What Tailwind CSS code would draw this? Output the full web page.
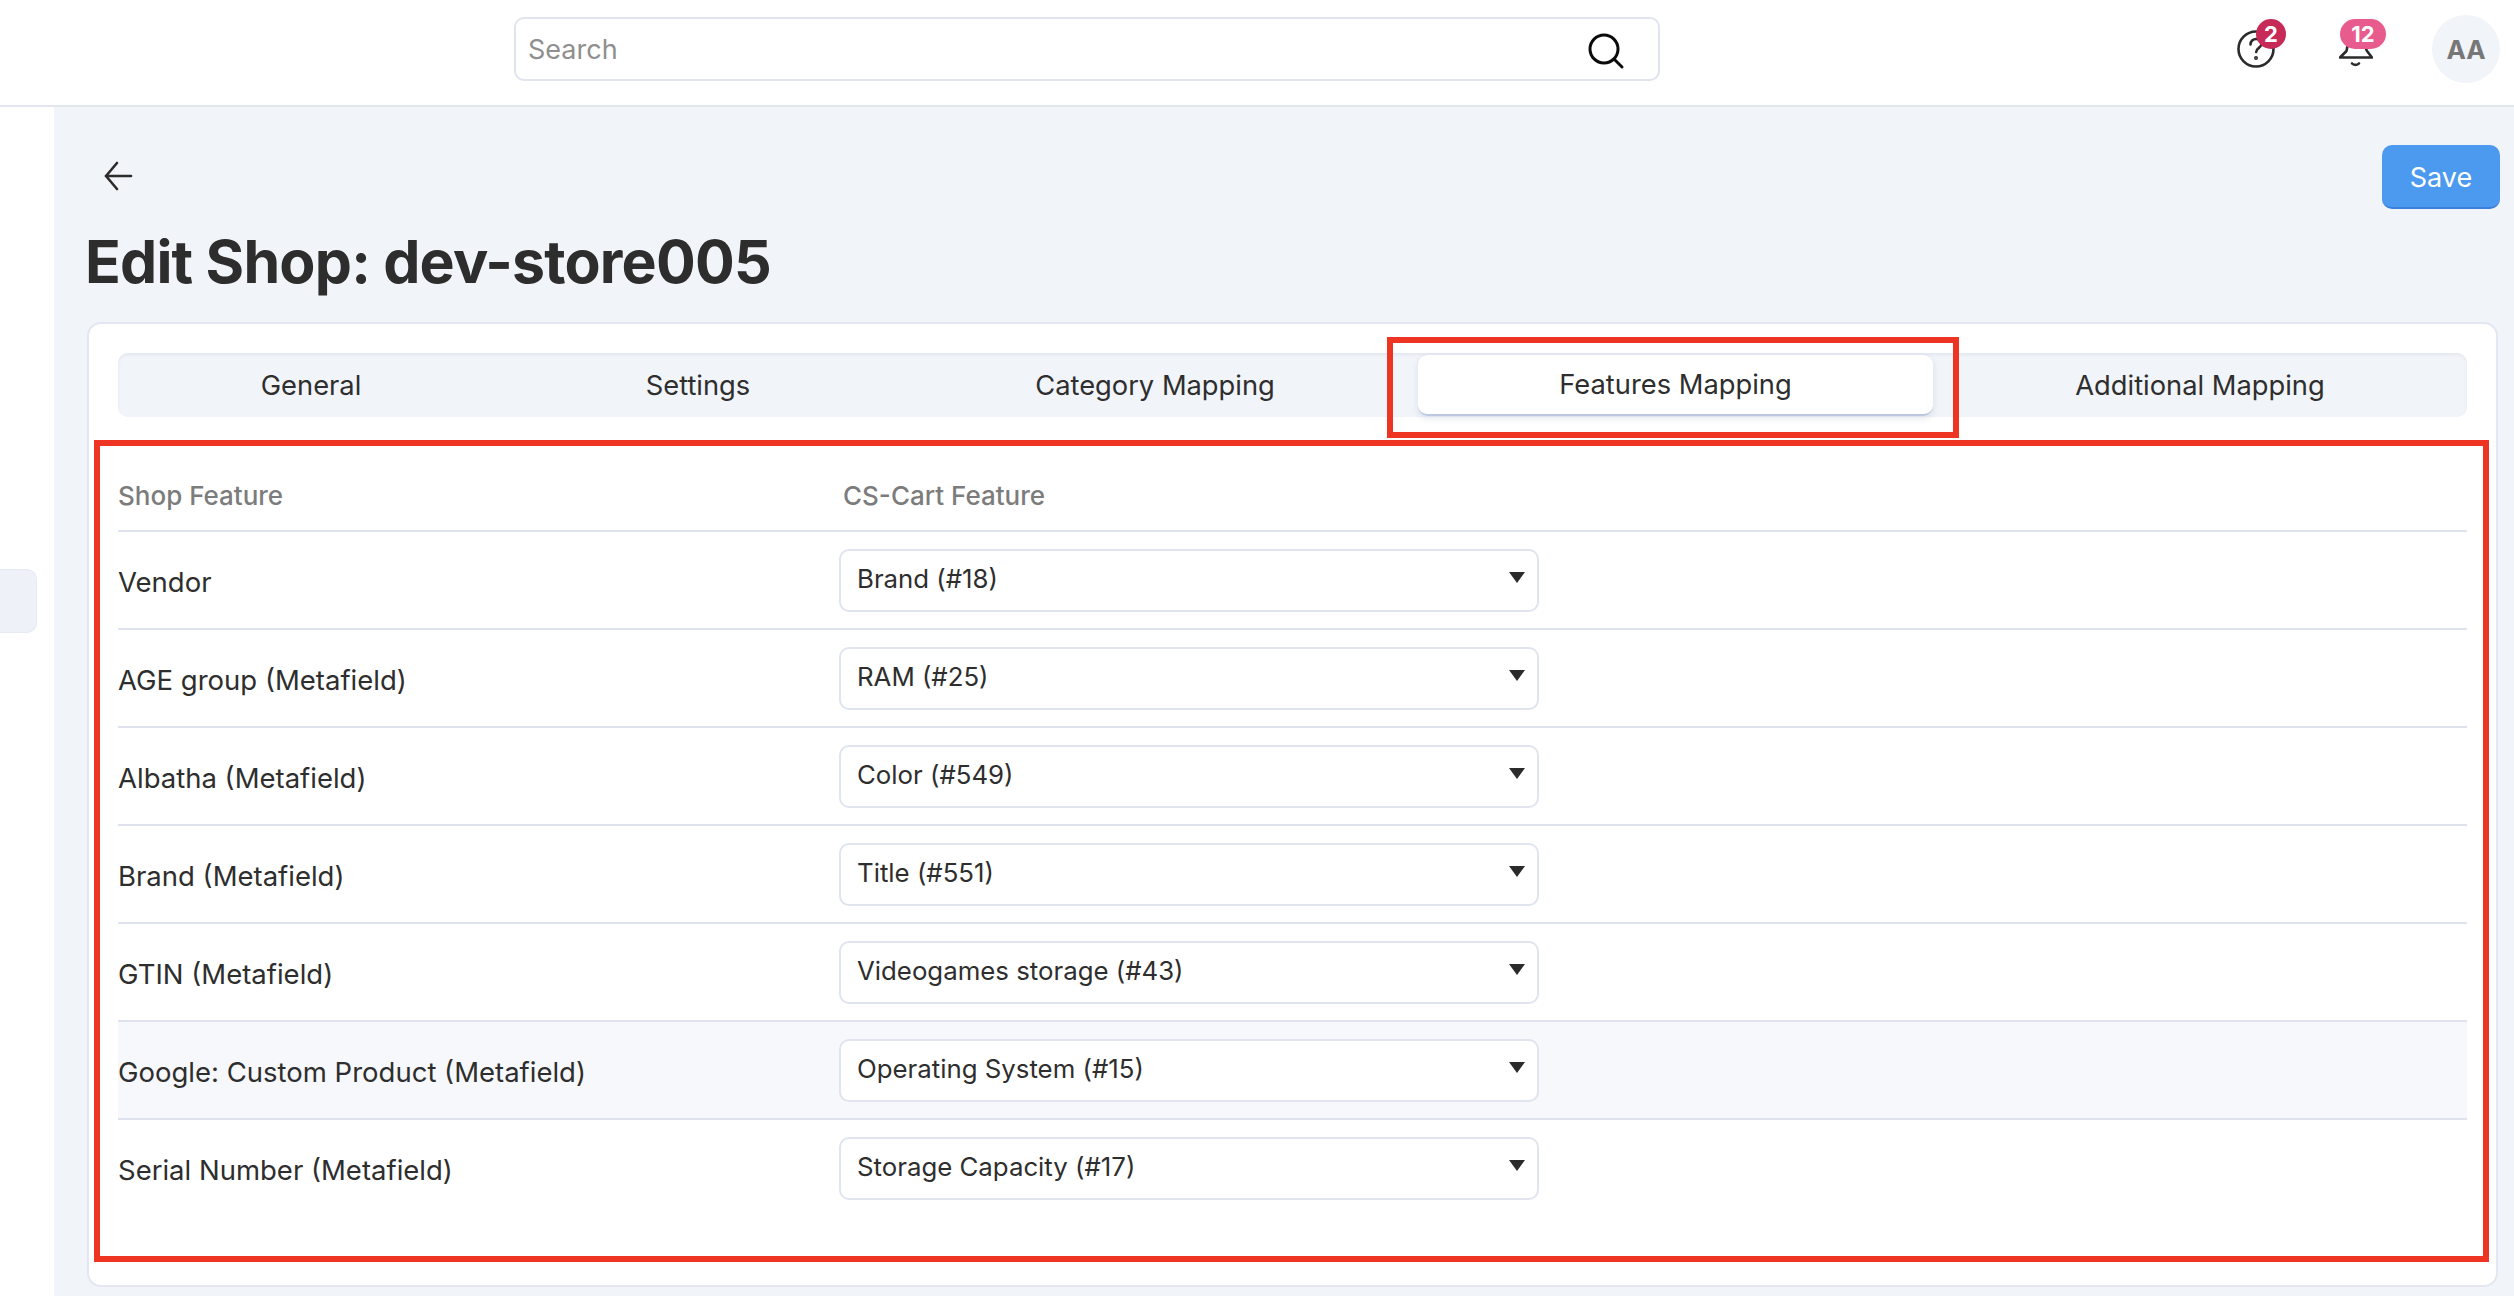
<!DOCTYPE html>
<html lang="en">
<head>
    <meta charset="UTF-8">
    <meta name="viewport" content="width=device-width, initial-scale=1.0">
    <title>Edit Shop</title>
    <script src="https://cdn.jsdelivr.net/npm/@tailwindcss/browser@4"></script>
</head>
<body class="bg-[#f1f4f9] font-['Inter',sans-serif] text-[#2e2e2e] w-[2514px] h-[1296px] overflow-hidden relative">

    <!-- Top bar -->
    <header class="h-[107px] bg-white border-b-2 border-[#e2e6ef] flex items-start relative">
        <div class="ml-[514px] mt-[17px] w-[1146px] h-[64px] flex rounded-[10px] border-2 border-[#dfe4ef]">
            <div class="flex-1 pl-[12px] pt-[2px] flex items-center text-[27px] text-[#8f8f8f]">Search</div>
            <div class="w-[104px]">
                <svg class="ml-[30px] mt-[11px]" width="44" height="44" viewBox="0 0 44 44" fill="none" stroke="#0b0b0b" stroke-width="3" stroke-linecap="round"><circle cx="20" cy="19" r="14"/><path d="M30 29l8 8"/></svg>
            </div>
        </div>

        <div class="ml-auto flex items-start">
            <!-- help -->
            <div class="relative w-[48px] h-[60px] mt-[19px]">
                <svg class="absolute -left-[1px] top-[11px]" width="38" height="38" viewBox="0 0 38 38" fill="none" stroke="#2b2b2b" stroke-width="2.6" stroke-linecap="round"><circle cx="19" cy="19" r="17.500"/><path d="M13.500 14.500c0-3.200 2.500-5.500 5.700-5.500 3.100 0 5.400 2 5.400 4.800 0 4-5.400 4.200-5.400 8.200"/><circle cx="19" cy="28" r="0.700" fill="#2b2b2b"/></svg>
                <span class="absolute left-[18px] top-0 w-[30px] h-[30px] rounded-full bg-[#c72a57] text-white text-[22px] leading-[30px] font-bold text-center">2</span>
            </div>
            <!-- notifications -->
            <div class="relative w-[46px] h-[60px] mt-[19px] ml-[54px]">
                <svg class="absolute -left-[1px] top-[16px]" width="34" height="32" viewBox="0 0 34 32" fill="none" stroke="#2b2b2b" stroke-width="2.6" stroke-linecap="round" stroke-linejoin="round"><path d="M9 4c0 0 0 7-1.500 12L1 22.500h32L28 16C25.500 12 25.500 4 25.500 4"/><path d="M13 28.500c1.500 1.800 5.500 1.800 7 0"/></svg>
                <span class="absolute left-0 top-0 w-[46px] h-[30px] rounded-full bg-[#e85c8d] text-white text-[22px] leading-[30px] font-bold text-center">12</span>
            </div>
            <!-- avatar -->
            <div class="w-[68px] h-[68px] mt-[15px] ml-[46px] mr-[14px] rounded-full bg-[#f1f4f9] text-[#777777] text-[26px] font-bold flex items-center justify-center">AA</div>
        </div>
    </header>

    <div class="flex">
        <!-- Sidebar -->
        <aside class="w-[54px] h-[1189px] bg-white shrink-0">
            <div class="mt-[462px] w-[37px] h-[64px] bg-[#eef2f8] rounded-r-[10px] border border-l-0 border-[#e6ebf3]"></div>
        </aside>

        <main class="flex-1 pl-[33px] pr-[16px]">
            <div class="flex items-start justify-between">
                <svg class="mt-[54px] ml-[16px]" width="30" height="30" viewBox="0 0 30 30" fill="none" stroke="#2b2b2b" stroke-width="2.6" stroke-linecap="round" stroke-linejoin="round"><path d="M28 15H3"/><path d="M14 2L3 15l11 13"/></svg>
                <button class="mt-[38px] mr-[-2px] w-[118px] h-[64px] pt-[4px] rounded-[10px] bg-[#4b9aef] border-b-2 border-[#3a7fdc] text-white text-[27px] font-normal">Save</button>
            </div>

            <h1 class="mt-[18px] -ml-[2px] h-[95px] text-[59px] leading-[70px] font-bold tracking-[-0.8px] text-[#2d2d2d]">Edit Shop: dev-store005</h1>

            <!-- Card -->
            <section class="w-[2411px] h-[965px] bg-white rounded-[14px] border-2 border-[#e2e7f1] pt-[29px] px-[29px]">
                <nav class="w-[2349px] h-[64px] flex items-center bg-[#f1f4f9] rounded-[10px] shadow-[inset_0_2px_3px_#e3e7f0] text-[27.3px]">
                    <div class="w-[386px] pt-[2px] text-center">General</div>
                    <div class="w-[388px] pt-[2px] text-center">Settings</div>
                    <div class="w-[526px] pt-[2px] text-center">Category Mapping</div>
                    <div class="w-[515px] h-[62px] pt-[2px] flex items-center justify-center bg-white rounded-[10px] border-t border-[#e2e7f1] border-b-2 border-b-[#bcc8df] shadow-[0_3px_6px_rgba(90,110,150,0.15)]">Features Mapping</div>
                    <div class="w-[534px] pt-[2px] text-center">Additional Mapping</div>
                </nav>

                <div class="w-[2349px] mt-[50px] text-[27.5px]">
                    <div class="h-[65px] flex border-b-2 border-[#dde2ed] text-[26px] font-medium text-[#7c7c7c]">
                        <div class="w-[725px] pt-[9px]">Shop Feature</div>
                        <div class="pt-[9px]">CS-Cart Feature</div>
                    </div>

                    <div class="h-[98px] flex items-center border-b-2 border-[#dde2ed]">
                        <div class="w-[721px] pt-[6px]">Vendor</div>
                        <div class="w-[700px] h-[63px] flex justify-between bg-white rounded-[10px] border-2 border-[#dfe4ef] pl-[16px] pr-[12px] pt-[9px] text-[25.8px]">Brand (#18)<svg class="mt-[12px]" width="16" height="11" viewBox="0 0 16 11"><path d="M0 0h16L8 11z" fill="#2b2b2b"/></svg></div>
                    </div>
                    <div class="h-[98px] flex items-center border-b-2 border-[#dde2ed]">
                        <div class="w-[721px] pt-[6px]">AGE group (Metafield)</div>
                        <div class="w-[700px] h-[63px] flex justify-between bg-white rounded-[10px] border-2 border-[#dfe4ef] pl-[16px] pr-[12px] pt-[9px] text-[25.8px]">RAM (#25)<svg class="mt-[12px]" width="16" height="11" viewBox="0 0 16 11"><path d="M0 0h16L8 11z" fill="#2b2b2b"/></svg></div>
                    </div>
                    <div class="h-[98px] flex items-center border-b-2 border-[#dde2ed]">
                        <div class="w-[721px] pt-[6px]">Albatha (Metafield)</div>
                        <div class="w-[700px] h-[63px] flex justify-between bg-white rounded-[10px] border-2 border-[#dfe4ef] pl-[16px] pr-[12px] pt-[9px] text-[25.8px]">Color (#549)<svg class="mt-[12px]" width="16" height="11" viewBox="0 0 16 11"><path d="M0 0h16L8 11z" fill="#2b2b2b"/></svg></div>
                    </div>
                    <div class="h-[98px] flex items-center border-b-2 border-[#dde2ed]">
                        <div class="w-[721px] pt-[6px]">Brand (Metafield)</div>
                        <div class="w-[700px] h-[63px] flex justify-between bg-white rounded-[10px] border-2 border-[#dfe4ef] pl-[16px] pr-[12px] pt-[9px] text-[25.8px]">Title (#551)<svg class="mt-[12px]" width="16" height="11" viewBox="0 0 16 11"><path d="M0 0h16L8 11z" fill="#2b2b2b"/></svg></div>
                    </div>
                    <div class="h-[98px] flex items-center border-b-2 border-[#dde2ed]">
                        <div class="w-[721px] pt-[6px]">GTIN (Metafield)</div>
                        <div class="w-[700px] h-[63px] flex justify-between bg-white rounded-[10px] border-2 border-[#dfe4ef] pl-[16px] pr-[12px] pt-[9px] text-[25.8px]">Videogames storage (#43)<svg class="mt-[12px]" width="16" height="11" viewBox="0 0 16 11"><path d="M0 0h16L8 11z" fill="#2b2b2b"/></svg></div>
                    </div>
                    <div class="h-[98px] flex items-center border-b-2 border-[#dde2ed] bg-[#f7f8fb]">
                        <div class="w-[721px] pt-[6px]">Google: Custom Product (Metafield)</div>
                        <div class="w-[700px] h-[63px] flex justify-between bg-white rounded-[10px] border-2 border-[#dfe4ef] pl-[16px] pr-[12px] pt-[9px] text-[25.8px]">Operating System (#15)<svg class="mt-[12px]" width="16" height="11" viewBox="0 0 16 11"><path d="M0 0h16L8 11z" fill="#2b2b2b"/></svg></div>
                    </div>
                    <div class="h-[98px] flex items-center border-b-2 border-transparent">
                        <div class="w-[721px] pt-[6px]">Serial Number (Metafield)</div>
                        <div class="w-[700px] h-[63px] flex justify-between bg-white rounded-[10px] border-2 border-[#dfe4ef] pl-[16px] pr-[12px] pt-[9px] text-[25.8px]">Storage Capacity (#17)<svg class="mt-[12px]" width="16" height="11" viewBox="0 0 16 11"><path d="M0 0h16L8 11z" fill="#2b2b2b"/></svg></div>
                    </div>
                </div>
            </section>
        </main>
    </div>

    <!-- Red annotation boxes drawn over the screenshot -->
    <div class="absolute left-[1387px] top-[337px] w-[572px] h-[101px] border-[6px] border-[#ee3524]"></div>
    <div class="absolute left-[94px] top-[440px] w-[2395px] h-[822px] border-[6px] border-[#ee3524]"></div>

</body>
</html>
